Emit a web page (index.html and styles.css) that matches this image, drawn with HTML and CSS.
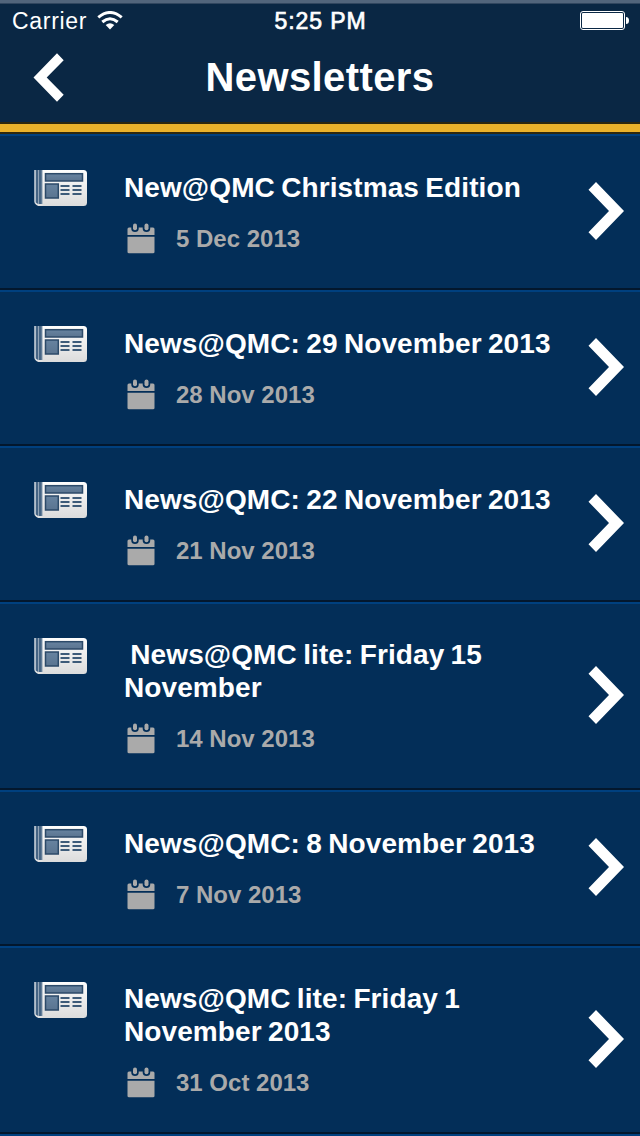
FILE: index.html
```
<!DOCTYPE html>
<html lang="en">

<head>
    <meta charset="UTF-8">
    <meta name="viewport" content="width=device-width, initial-scale=1.0">
    <title>Newsletters</title>
    <link rel="stylesheet" href="styles.css">
</head>

<body>

    <!-- shared icons -->
    <svg class="sprite" width="0" height="0">
        <defs>
            <linearGradient id="paper" x1="0" y1="0" x2="0" y2="1">
                <stop offset="0" stop-color="#fdfdfd" />
                <stop offset="1" stop-color="#dcdcdc" />
            </linearGradient>
            <linearGradient id="ink" x1="0" y1="0" x2="0" y2="1">
                <stop offset="0" stop-color="#6783a0" />
                <stop offset="1" stop-color="#5a7490" />
            </linearGradient>
        </defs>
        <symbol id="news" viewBox="0 0 54 38">
            <path d="M.4 1H1.800V35.600Q.4 34.600.4 32.500ZM4.300 1H5.300V36.500H4.300ZM7.500 1H8.500V36.500H7.500Z" fill="#fff" />
            <path d="M1.800 1H4.300V36L1.800 35.200ZM5.300 1H7.500V36H5.300Z" fill="#456484" />
            <path d="M1 33L4 35H9V37H4.500Q1.500 36.500 1 33Z" fill="#e2e2e2" />
            <path d="M8.500 1H49.500Q53 1 53 4.500V33.500Q53 37 49.500 37H8.500Z" fill="url(#paper)" />
            <rect x="11.500" y="4.700" width="37" height="7.300" fill="url(#ink)" stroke="#2c4a69" stroke-width="1.500" />
            <rect x="11.500" y="15" width="12.800" height="14" fill="url(#ink)" stroke="#2c4a69" stroke-width="1.500" />
            <path d="M26.500 17H35.500M38.500 17H47.500M26.500 21H35.500M38.500 21H47.500M26.500 25H35.500M38.500 25H47.500" stroke="#3d5b79" stroke-width="2" />
        </symbol>
        <symbol id="calendar" viewBox="0 0 28 31">
            <path d="M.5 12V6Q.5 4.500 2 4.500H4.300V6Q4.500 9 8 9T11.700 6V4.500H15.700V6Q16 9 19.500 9T23.200 6V4.500H26Q27.500 4.500 27.500 6V12Z" />
            <path d="M.5 13.700H27.500V29Q27.500 30.300 26 30.300H2Q.5 30.300.5 29Z" />
            <rect x="6" y=".6" width="4" height="6.600" rx="2" />
            <rect x="17.500" y=".6" width="4" height="6.600" rx="2" />
        </symbol>
        <symbol id="arrow" viewBox="0 0 36 58">
            <path d="M8 0L36 29L8 58L.5 50.300L21 29L.5 7.700Z" />
        </symbol>
    </svg>

    <div class="header">
        <div class="status">
            <div class="carrier">
                <span>Carrier</span>
                <svg width="26" height="19" viewBox="0 0 26 19" fill="none" stroke="#fff" stroke-width="3">
                    <path d="M1.300 6.400Q13-3.400 24.700 6.400" />
                    <path d="M5.300 11Q13 4.400 20.700 11" />
                    <path d="M8.700 14Q13 10.500 17.300 14L13 18.500Z" fill="#fff" stroke="none" />
                </svg>
            </div>
            <div class="time">5:25 PM</div>
            <svg class="battery" width="49" height="19" viewBox="0 0 49 19" fill="#fff">
                <rect x=".5" y=".5" width="44" height="18" rx="2.500" fill="none" stroke="#fff" />
                <rect x="2" y="2" width="41" height="15" rx="1" />
                <path d="M46 6Q49 6 49 9.500T46 13Z" />
            </svg>
        </div>
        <div class="nav">
            <svg class="back" width="31" height="49" viewBox="0 0 31 49" fill="#fff">
                <path d="M24 .3L30.700 7.300L13.700 24.500L30.700 41.700L24 48.700L.5 24.500Z" />
            </svg>
            <h1>Newsletters</h1>
        </div>
    </div>

    <ul class="list">
        <li class="item">
            <svg class="news"><use href="#news" /></svg>
            <div class="info">
                <h2>New@QMC Christmas Edition</h2>
                <p><svg class="calendar"><use href="#calendar" /></svg><span>5 Dec 2013</span></p>
            </div>
            <svg class="arrow"><use href="#arrow" /></svg>
        </li>
        <li class="item">
            <svg class="news"><use href="#news" /></svg>
            <div class="info">
                <h2>News@QMC: 29 November 2013</h2>
                <p><svg class="calendar"><use href="#calendar" /></svg><span>28 Nov 2013</span></p>
            </div>
            <svg class="arrow"><use href="#arrow" /></svg>
        </li>
        <li class="item">
            <svg class="news"><use href="#news" /></svg>
            <div class="info">
                <h2>News@QMC: 22 November 2013</h2>
                <p><svg class="calendar"><use href="#calendar" /></svg><span>21 Nov 2013</span></p>
            </div>
            <svg class="arrow"><use href="#arrow" /></svg>
        </li>
        <li class="item tall">
            <svg class="news"><use href="#news" /></svg>
            <div class="info">
                <h2>&nbsp;News@QMC lite: Friday 15<br>November</h2>
                <p><svg class="calendar"><use href="#calendar" /></svg><span>14 Nov 2013</span></p>
            </div>
            <svg class="arrow"><use href="#arrow" /></svg>
        </li>
        <li class="item">
            <svg class="news"><use href="#news" /></svg>
            <div class="info">
                <h2>News@QMC: 8 November 2013</h2>
                <p><svg class="calendar"><use href="#calendar" /></svg><span>7 Nov 2013</span></p>
            </div>
            <svg class="arrow"><use href="#arrow" /></svg>
        </li>
        <li class="item tall">
            <svg class="news"><use href="#news" /></svg>
            <div class="info">
                <h2>News@QMC lite: Friday 1<br>November 2013</h2>
                <p><svg class="calendar"><use href="#calendar" /></svg><span>31 Oct 2013</span></p>
            </div>
            <svg class="arrow"><use href="#arrow" /></svg>
        </li>
    </ul>

</body>

</html>
```

FILE: styles.css
```
* {
    padding: 0;
    margin: 0;
    box-sizing: border-box;
}

body {
    width: 640px;
    height: 1136px;
    overflow: hidden;
    background-color: #032e58;
    color: #fff;
    font-family: "Liberation Sans", Arial, sans-serif;
}

.sprite {
    display: block;
}

.header {
    height: 134px;
    background-color: #0a2744;
    border-top: 3px solid #52657c;
    border-bottom: 2px solid #2d280f;
    box-shadow: inset 0 1px #31465f;
}

.status {
    display: grid;
    grid-template-columns: 1fr auto 1fr;
    align-items: center;
    height: 35px;
    padding: 0 11px 0 12px;
}

.carrier {
    display: flex;
    align-items: center;
    gap: 10px;
    font-size: 23px;
    letter-spacing: 0.7px;
    padding-top: 1px;
}

.carrier svg {
    margin-bottom: 2px;
}

.time {
    font-size: 23px;
    letter-spacing: 0.9px;
    padding-top: 1px;
    -webkit-text-stroke: 0.7px #fff;
}

.battery {
    justify-self: end;
}

.nav {
    display: grid;
    grid-template-columns: 64px 1fr 64px;
    align-items: center;
    height: 94px;
    padding-bottom: 8px;
    border-bottom: 8px solid #eab22b;
    box-shadow: inset 0 -2px #2d280f;
}

.back {
    margin-left: 33px;
}

h1 {
    font-size: 40px;
    line-height: 46px;
    letter-spacing: 0.4px;
    text-align: center;
}

.list {
    list-style: none;
    border-bottom: 2px solid #00407f;
}

.item {
    display: flex;
    height: 156px;
    padding: 33px 16px 0 34px;
    border-top: 2px solid #00407f;
    border-bottom: 2px solid #03172d;
}

.tall {
    height: 188px;
}

.news {
    width: 54px;
    height: 38px;
    margin-right: 36px;
}

.info {
    flex: 1;
    white-space: nowrap;
}

h2 {
    font-size: 28px;
    line-height: 33px;
    height: 35px;
    padding-top: 2px;
    letter-spacing: 0.1px;
    word-spacing: -1.6px;
}

.tall h2 {
    height: 67px;
    padding-top: 1px;
}

.info p {
    display: flex;
    align-items: center;
    height: 31px;
    margin: 19px 0 0 3px;
    color: #aaa;
    font-size: 24px;
    font-weight: bold;
}

.calendar {
    width: 28px;
    height: 31px;
    margin-right: 21px;
    fill: #aaa;
}

.arrow {
    width: 36px;
    height: 58px;
    margin: -1px 0 34px;
    align-self: center;
    fill: #fff;
}
```
